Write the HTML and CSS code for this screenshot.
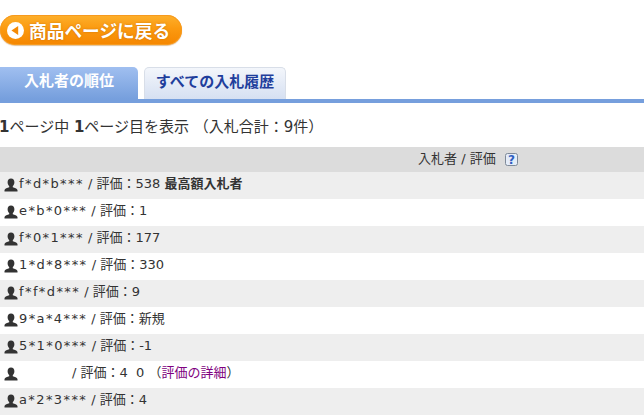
FILE: index.html
```html
<!DOCTYPE html>
<html lang="ja">

<head>
    <meta charset="UTF-8">
    <title>入札者の順位</title>
    <link rel="stylesheet" href="styles.css">
</head>

<body>
    <!-- Shared bidder icon -->
    <svg class="icon-defs" width="0" height="0">
        <symbol id="user" viewBox="0 0 14 14">
            <path d="M7 .5c2.2 0 3.400 1.600 3.400 3.700 0 1.700-.8 3.200-1.600 3.900v1.200c1.900.7 4.200 1.400 4.700 2.600v1.600H.5v-1.600c.5-1.200 2.800-1.900 4.700-2.600V8.100c-.8-.7-1.600-2.200-1.600-3.900C3.600 2.100 4.800.5 7 .5z"/>
        </symbol>
    </svg>

    <!-- Back button -->
    <a class="back-button" href="#">
        <svg class="back-icon" viewBox="0 0 16 16" width="17" height="17">
            <circle cx="8" cy="8" r="8" fill="#fff"/>
            <path d="M10.500 3.800v8.400L4.200 8z" fill="#f58a05"/>
        </svg>
        商品ページに戻る
    </a>

    <!-- Tabs -->
    <div class="tabs">
        <div class="tab tab-active">入札者の順位</div>
        <div class="tab tab-other">すべての入札履歴</div>
    </div>

    <p class="page-info"><strong>1</strong>ページ中 <strong>1</strong>ページ目を表示 （入札合計：9件）</p>

    <div class="bid-head">
        入札者 / 評価
        <svg class="help-icon" viewBox="0 0 13 13" width="13" height="13">
            <rect x="0.5" y="0.5" width="12" height="12" rx="2" fill="#e4ecf8" stroke="#7f8a99"/>
            <text x="6.500" y="10.500" text-anchor="middle" class="help-mark">?</text>
        </svg>
    </div>

    <div class="bid-row">
        <svg class="user-icon"><use href="#user"/></svg>
        <span><span class="bidder">f*d*b***</span> / 評価：538 <strong>最高額入札者</strong></span>
    </div>
    <div class="bid-row">
        <svg class="user-icon"><use href="#user"/></svg>
        <span><span class="bidder">e*b*0***</span> / 評価：1</span>
    </div>
    <div class="bid-row">
        <svg class="user-icon"><use href="#user"/></svg>
        <span><span class="bidder">f*0*1***</span> / 評価：177</span>
    </div>
    <div class="bid-row">
        <svg class="user-icon"><use href="#user"/></svg>
        <span><span class="bidder">1*d*8***</span> / 評価：330</span>
    </div>
    <div class="bid-row">
        <svg class="user-icon"><use href="#user"/></svg>
        <span><span class="bidder">f*f*d***</span> / 評価：9</span>
    </div>
    <div class="bid-row">
        <svg class="user-icon"><use href="#user"/></svg>
        <span><span class="bidder">9*a*4***</span> / 評価：新規</span>
    </div>
    <div class="bid-row">
        <svg class="user-icon"><use href="#user"/></svg>
        <span><span class="bidder">5*1*0***</span> / 評価：-1</span>
    </div>
    <div class="bid-row">
        <svg class="user-icon"><use href="#user"/></svg>
        <span class="masked">/ 評価：4&nbsp;&nbsp;0 （<a class="detail-link" href="#">評価の詳細</a>）</span>
    </div>
    <div class="bid-row">
        <svg class="user-icon"><use href="#user"/></svg>
        <span><span class="bidder">a*2*3***</span> / 評価：4</span>
    </div>
</body>

</html>
```

FILE: styles.css
```css
body {
    margin: 0;
    background-color: white;
    color: #333;
    font-family: 'DejaVu Sans', 'Noto Sans CJK JP', sans-serif;
    font-size: 13px;
    overflow: hidden;
}

.icon-defs {
    display: block;
    height: 0;
}

.back-button {
    display: flex;
    align-items: center;
    gap: 5px;
    width: 182px;
    height: 30px;
    box-sizing: border-box;
    margin-top: 15px;
    padding-left: 7px;
    border-radius: 15px;
    background: linear-gradient(#fdb02c, #fb9a10 45%, #f58600);
    box-shadow: inset 0 0 0 1px #f79a1e, 0 1px 1px rgba(180, 100, 0, 0.4);
    color: white;
    font-family: 'Noto Sans CJK JP', sans-serif;
    font-size: 17.700px;
    font-weight: bold;
    text-decoration: none;
    white-space: nowrap;
    text-shadow: 0 0 2px rgba(170, 90, 0, 0.6);
}

.back-icon {
    flex: none;
}

.tabs {
    display: flex;
    gap: 6px;
    align-items: flex-end;
    margin-top: 22px;
    height: 32px;
    border-bottom: 4px solid #769fdd;
}

.tab {
    height: 32px;
    box-sizing: border-box;
    font-family: 'Noto Sans CJK JP', sans-serif;
    font-size: 15px;
    font-weight: bold;
    text-align: center;
    line-height: 25px;
}

.tab-active {
    width: 138px;
    border-radius: 0 5px 0 0;
    background: linear-gradient(#a0bff0, #769fdd);
    color: white;
}

.tab-other {
    width: 142px;
    border: 1px solid #d8dee8;
    border-bottom: none;
    border-radius: 5px 5px 0 0;
    background: linear-gradient(#f3f6fb, #d6e0f2);
    color: #1f3e9c;
}

.page-info {
    margin: 0 0 0 -1px;
    height: 44px;
    line-height: 49px;
    font-size: 15px;
    white-space: nowrap;
}

.bid-head {
    display: flex;
    align-items: center;
    gap: 9px;
    height: 25px;
    padding-left: 418px;
    padding-bottom: 5px;
    box-sizing: border-box;
    background-color: #dcdcdc;
}

.help-icon {
    flex: none;
    margin-top: 4px;
}

.help-mark {
    fill: #2f5fc0;
    font-size: 12px;
    font-weight: bold;
}

.bid-row {
    display: flex;
    align-items: center;
    gap: 1px;
    height: 27px;
    padding-left: 4px;
    padding-bottom: 6px;
    box-sizing: border-box;
}

.bid-row:nth-of-type(odd) {
    background-color: #eeeeee;
}

.bidder {
    letter-spacing: 1.400px;
}

.user-icon {
    flex: none;
    width: 14px;
    height: 14px;
    margin-top: 5px;
    fill: #333;
}

.masked {
    padding-left: 53px;
}

.detail-link {
    color: #800080;
    text-decoration: none;
}
```
